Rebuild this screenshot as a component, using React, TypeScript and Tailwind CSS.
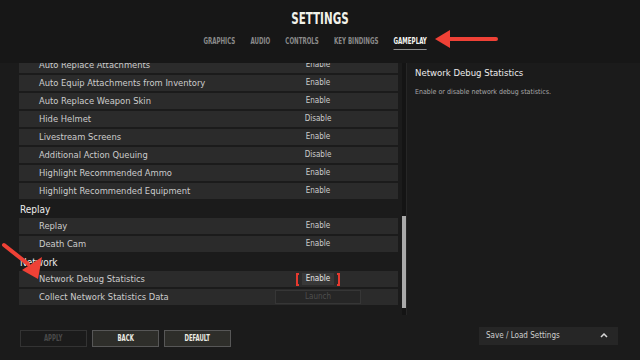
import React from 'react';

type Row = { label: string; value: string; kind?: 'toggle' | 'selected' | 'launch' };

const gameplayRows: Row[] = [
  { label: 'Auto Replace Attachments', value: 'Enable' },
  { label: 'Auto Equip Attachments from Inventory', value: 'Enable' },
  { label: 'Auto Replace Weapon Skin', value: 'Enable' },
  { label: 'Hide Helmet', value: 'Disable' },
  { label: 'Livestream Screens', value: 'Enable' },
  { label: 'Additional Action Queuing', value: 'Disable' },
  { label: 'Highlight Recommended Ammo', value: 'Enable' },
  { label: 'Highlight Recommended Equipment', value: 'Enable' },
];

const replayRows: Row[] = [
  { label: 'Replay', value: 'Enable' },
  { label: 'Death Cam', value: 'Enable' },
];

const networkRows: Row[] = [
  { label: 'Network Debug Statistics', value: 'Enable', kind: 'selected' },
  { label: 'Collect Network Statistics Data', value: 'Launch', kind: 'launch' },
];

const tabs = ['GRAPHICS', 'AUDIO', 'CONTROLS', 'KEY BINDINGS', 'GAMEPLAY'];

function SettingRow({ row }: { row: Row }) {
  return (
    <div className="flex items-center h-[16px] mb-[2px] bg-[#2b2b2b] text-[9.3px] text-[#cdcdcd]">
      <span className="w-[256px] pl-[20px] truncate">{row.label}</span>
      <div className="w-[86px] flex justify-center text-[8px]">
        {row.kind === 'selected' ? (
          <span className="flex items-center gap-[3px]">
            <span className="w-[3px] h-[13px] border-2 border-r-0 border-[#e5392f]" />
            <span className="px-[4px] bg-[#383838] text-[#e6e6e6] leading-[12px]">{row.value}</span>
            <span className="w-[3px] h-[13px] border-2 border-l-0 border-[#e5392f]" />
          </span>
        ) : row.kind === 'launch' ? (
          <span className="w-[86px] h-[14px] border border-[#363636] bg-[#262626] text-[#4e4e4e] flex items-center justify-center">
            {row.value}
          </span>
        ) : (
          <span>{row.value}</span>
        )}
      </div>
    </div>
  );
}

function Heading({ title }: { title: string }) {
  return <div className="h-[17px] flex items-center pl-[1px] text-[10px] text-[#ececec]">{title}</div>;
}

export default function App() {
  return (
    <div
      className="relative w-[640px] h-[360px] overflow-hidden bg-[#1b1b1b] flex flex-col"
      style={{ fontFamily: '"DejaVu Sans Condensed", "Liberation Sans", sans-serif' }}
    >
      {/* header */}
      <div className="h-[63px] bg-[#171717] flex flex-col items-center">
        <h1 className="mt-[9px] text-[16px] leading-[20px] font-bold text-[#f2f2ea] scale-x-[0.72]">SETTINGS</h1>
        <div className="mt-[6px] ml-[-10px] flex gap-[21px] text-[8.5px] font-bold scale-x-[0.72]">
          {tabs.map((t) => (
            <div key={t} className="flex flex-col items-center">
              <span className={t === 'GAMEPLAY' ? 'text-[#f5f5f0]' : 'text-[#8a8a8a]'}>{t}</span>
              {t === 'GAMEPLAY' && <span className="mt-[1px] w-full h-px bg-[#8f8f8f]" />}
            </div>
          ))}
        </div>
      </div>

      {/* body */}
      <div className="flex h-[252px]">
        <div className="w-[402px] pl-[19px] pr-[4px] overflow-hidden">
          <div className="mt-[-6px]">
            {gameplayRows.map((r) => (
              <SettingRow key={r.label} row={r} />
            ))}
            <Heading title="Replay" />
            {replayRows.map((r) => (
              <SettingRow key={r.label} row={r} />
            ))}
            <Heading title="Network" />
            {networkRows.map((r) => (
              <SettingRow key={r.label} row={r} />
            ))}
          </div>
        </div>
        {/* scrollbar */}
        <div className="w-[4px] h-[252px] flex flex-col bg-[#141414]">
          <div className="h-[153px]" />
          <div className="h-[92px] bg-[#a9a9a9]" />
        </div>
        <div className="flex-1 border-l border-[#262626] pl-[8px] pt-[3px]">
          <div className="text-[9.5px] text-[#ececec]">Network Debug Statistics</div>
          <div className="mt-[7px] text-[7px] text-[#a8a8a8]">Enable or disable network debug statistics.</div>
        </div>
      </div>

      {/* footer */}
      <div className="flex-1 flex items-center justify-between pl-[20px] pr-[22px]">
        <div className="flex gap-[5px] mt-[2px] text-[8.5px] font-bold">
          <button className="w-[67px] h-[17px] border border-[#333] text-[#4a4a4a]">
            <span className="inline-block scale-x-[0.7]">APPLY</span>
          </button>
          <button className="w-[67px] h-[17px] border border-[#575757] bg-[#2e2e2a] text-[#ecece4]">
            <span className="inline-block scale-x-[0.7]">BACK</span>
          </button>
          <button className="w-[67px] h-[17px] border border-[#575757] bg-[#2e2e2a] text-[#ecece4]">
            <span className="inline-block scale-x-[0.7]">DEFAULT</span>
          </button>
        </div>
        <div className="w-[139px] h-[18px] mt-[-4px] bg-[#262626] flex items-center justify-between pl-[7px] pr-[10px] text-[8px] text-[#cfcfcf]">
          <span>Save / Load Settings</span>
          <svg width="8" height="5" viewBox="0 0 8 5" fill="none">
            <path d="M1 4 L4 1 L7 4" stroke="#d8d8d8" strokeWidth="1.5" />
          </svg>
        </div>
      </div>

      {/* annotation arrows */}
      <svg className="absolute left-0 top-0 pointer-events-none" width="640" height="360">
        <line x1="448" y1="39" x2="496" y2="39" stroke="#ef4136" strokeWidth="4" strokeLinecap="round" />
        <polygon points="435,39 450,30 450,48" fill="#ef4136" />
        <line x1="4" y1="245" x2="28" y2="264" stroke="#ef4136" strokeWidth="4" strokeLinecap="round" />
        <polygon points="38,279 42,257 22,270" fill="#ef4136" />
      </svg>
    </div>
  );
}
